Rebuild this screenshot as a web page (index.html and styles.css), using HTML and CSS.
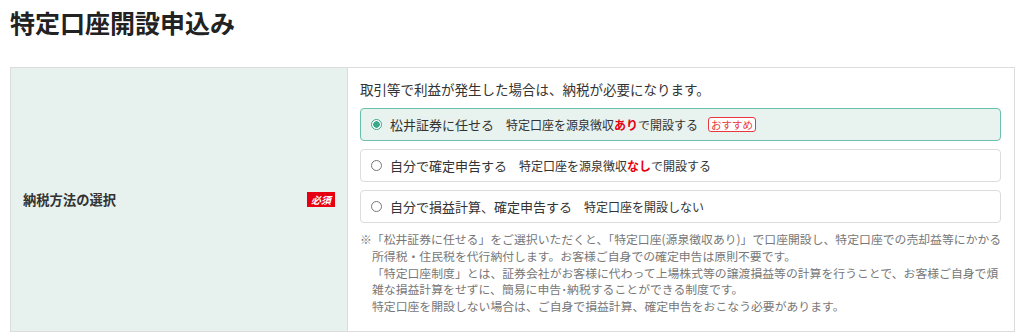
FILE: index.html
```html
<!DOCTYPE html>
<html lang="ja">
<head>
<meta charset="utf-8">
<link rel="stylesheet" href="styles.css">
</head>
<body>
<h1 class="title">特定口座開設申込み</h1>
<div class="form-table">
  <div class="label-cell">
    <span class="label-text">納税方法の選択</span>
    <span class="required">必須</span>
  </div>
  <div class="field-cell">
    <p class="lead">取引等で利益が発生した場合は、納税が必要になります。</p>
    <div class="options">
      <label class="option selected">
        <span class="radio checked"></span>
        <span class="opt-main">松井証券に任せる</span>
        <span class="opt-sub">特定口座を源泉徴収<b class="em">あり</b>で開設する</span>
        <span class="tag">おすすめ</span>
      </label>
      <label class="option">
        <span class="radio"></span>
        <span class="opt-main">自分で確定申告する</span>
        <span class="opt-sub">特定口座を源泉徴収<b class="em">なし</b>で開設する</span>
      </label>
      <label class="option">
        <span class="radio"></span>
        <span class="opt-main">自分で損益計算、確定申告する</span>
        <span class="opt-sub">特定口座を開設しない</span>
      </label>
    </div>
    <div class="notes">
      <p class="note first">※「松井証券に任せる」をご選択いただくと、「特定口座(源泉徴収あり)」で口座開設し、特定口座での売却益等にかかる所得税・住民税を代行納付します。お客様ご自身での確定申告は原則不要です。</p>
      <p class="note">「特定口座制度」とは、証券会社がお客様に代わって上場株式等の譲渡損益等の計算を行うことで、お客様ご自身で煩雑な損益計算をせずに、簡易に申告･納税することができる制度です。</p>
      <p class="note">特定口座を開設しない場合は、ご自身で損益計算、確定申告をおこなう必要があります。</p>
    </div>
  </div>
</div>
</body>
</html>
```

FILE: styles.css
```css
* { box-sizing: border-box; }
body {
  margin: 0;
  padding: 0 9px 0 10px;
  font-family: "Noto Sans CJK JP", "Noto Sans", sans-serif;
  color: #333;
  background: #fff;
}
.title {
  margin: 0;
  padding-top: 7px;
  height: 67px;
  font-size: 25px;
  line-height: 30px;
  font-weight: 700;
  color: #222;
}
.form-table {
  display: flex;
  border: 1px solid #dcdcdc;
  height: 265px;
}
.label-cell {
  width: 337px;
  flex: none;
  background: #e7f1ee;
  border-right: 1px solid #dcdcdc;
  display: flex;
  align-items: center;
  justify-content: space-between;
  padding: 0 12px 0 12px;
}
.label-text {
  font-size: 13.3px;
  font-weight: 700;
  color: #333;
}
.required {
  background: #e60012;
  color: #fff;
  font-size: 10px;
  font-weight: 700;
  line-height: 15px;
  padding: 0 4px;
  font-style: italic;
}
.field-cell {
  flex: 1;
  padding: 11px 13px 0 12px;
}
.lead {
  margin: 0;
  font-size: 13.5px;
  line-height: 20px;
}
.options {
  display: flex;
  flex-direction: column;
  gap: 8px;
  margin-top: 9px;
}
.option {
  display: flex;
  align-items: center;
  height: 33px;
  border: 1px solid #dcdcdc;
  border-radius: 4px;
  padding: 0 10px;
  background: #fff;
}
.option.selected {
  background: #e8f2ef;
  border-color: #6cbfab;
}
.radio {
  width: 11px;
  height: 11px;
  border: 1px solid #777;
  border-radius: 50%;
  margin-right: 8px;
  flex: none;
  background: #fff;
}
.radio.checked {
  border-color: #3aa88a;
  background: radial-gradient(circle, #3aa88a 0 3px, #fff 3.5px);
}
.opt-main {
  font-size: 13px;
  margin-right: 12px;
}
.opt-sub {
  font-size: 12px;
}
.em {
  color: #e60012;
  font-weight: 700;
}
.tag {
  margin-left: 10px;
  border: 1px solid #e8383d;
  border-radius: 3px;
  color: #e8383d;
  font-size: 10.5px;
  line-height: 13px;
  padding: 0 2px;
  background: #fff;
}
.notes {
  margin-top: 8px;
  margin-right: -3px;
}
.note {
  margin: 0;
  font-size: 11.85px;
  line-height: 16.75px;
  color: #777;
  padding-left: 12px;
}
.note.first {
  text-indent: -12px;
}
```
